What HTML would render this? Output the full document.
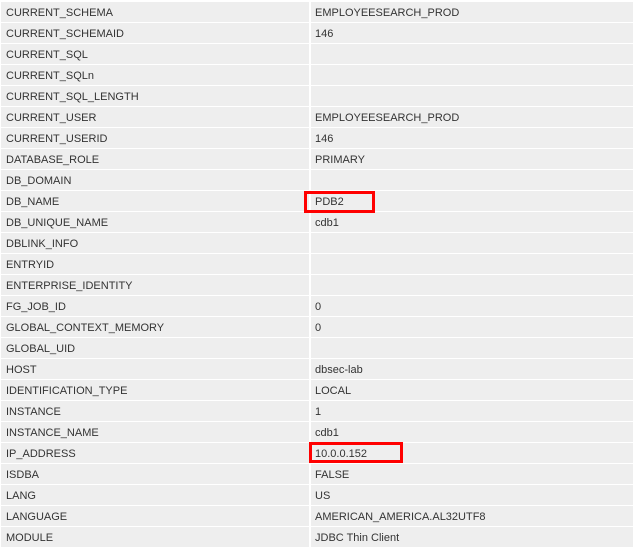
<!DOCTYPE html>
<html><head><style>
html,body{margin:0;background:#fff;width:636px;height:550px;overflow:hidden}
body{font-family:"Liberation Sans",Arial,sans-serif;font-size:11px;color:#333;position:relative}
.r{position:absolute;left:0;width:636px;height:20px}
.c{position:absolute;top:0;height:20px;background:#eee;line-height:23px;padding-left:5px;box-sizing:border-box}
.a{left:1px;width:308px}.b{left:311px;width:322px;padding-left:4px}
.box{position:absolute;border:3px solid #f00;box-sizing:border-box}
</style></head><body>
<div id="t"></div>
<div class="box" style="left:304px;top:191px;width:71px;height:22px"></div>
<div class="box" style="left:309px;top:442px;width:94px;height:21px"></div>
<script>
var d=[["CURRENT_SCHEMA","EMPLOYEESEARCH_PROD"],["CURRENT_SCHEMAID","146"],["CURRENT_SQL",""],["CURRENT_SQLn",""],["CURRENT_SQL_LENGTH",""],["CURRENT_USER","EMPLOYEESEARCH_PROD"],["CURRENT_USERID","146"],["DATABASE_ROLE","PRIMARY"],["DB_DOMAIN",""],["DB_NAME","PDB2"],["DB_UNIQUE_NAME","cdb1"],["DBLINK_INFO",""],["ENTRYID",""],["ENTERPRISE_IDENTITY",""],["FG_JOB_ID","0"],["GLOBAL_CONTEXT_MEMORY","0"],["GLOBAL_UID",""],["HOST","dbsec-lab"],["IDENTIFICATION_TYPE","LOCAL"],["INSTANCE","1"],["INSTANCE_NAME","cdb1"],["IP_ADDRESS","10.0.0.152"],["ISDBA","FALSE"],["LANG","US"],["LANGUAGE","AMERICAN_AMERICA.AL32UTF8"],["MODULE","JDBC Thin Client"]];
var h="";d.forEach(function(x,i){h+='<div class="r" style="top:'+(2+21*i)+'px"><div class="c a">'+x[0]+'</div><div class="c b">'+x[1]+'</div></div>';});
document.getElementById("t").innerHTML=h;
</script>
</body></html>
